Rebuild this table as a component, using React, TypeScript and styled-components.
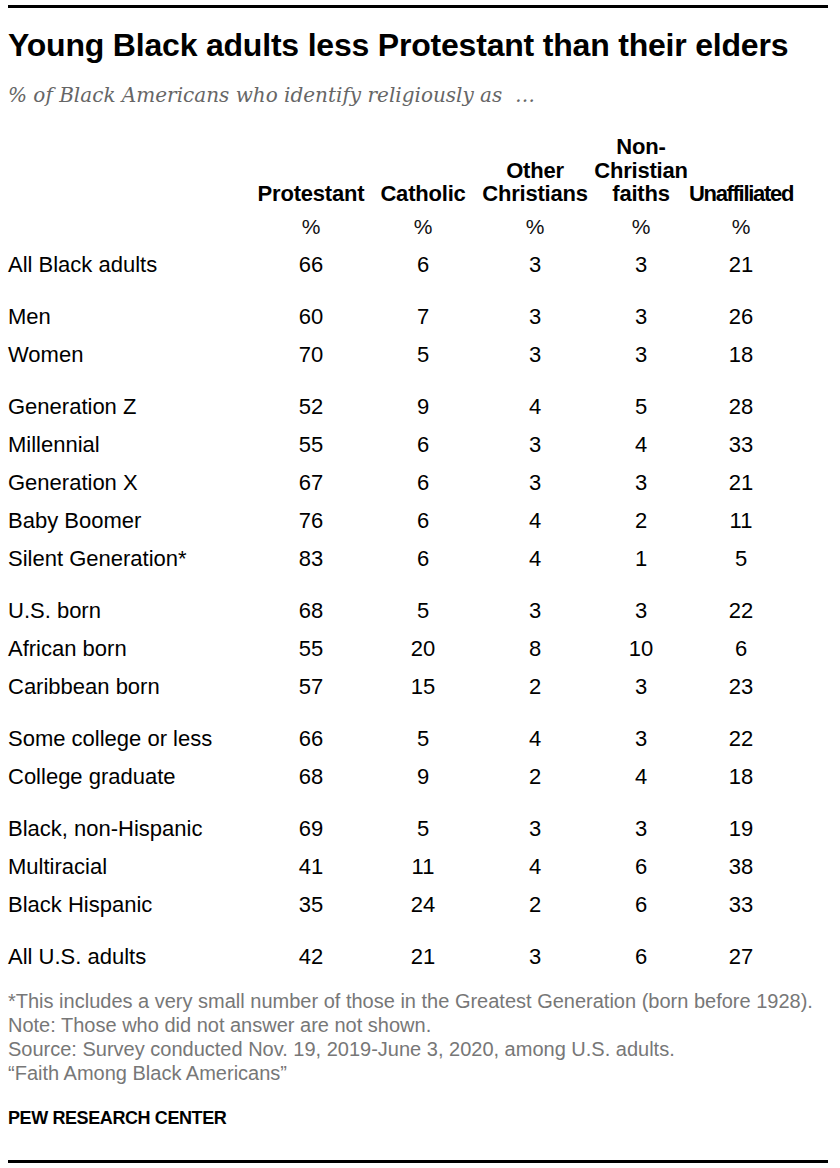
import React from "react";
import styled, { createGlobalStyle } from "styled-components";

const Global = createGlobalStyle`
  html, body { margin: 0; padding: 0; background: #fff; }
  body { font-family: "Liberation Sans", Arial, sans-serif; color: #000; }
`;

const Page = styled.div`
  width: 820px;
  padding: 5px 12px 0 8px;
  display: flex;
  flex-direction: column;
`;

const Rule = styled.div`
  height: 3px;
  background: #000;
`;

const Title = styled.h1`
  margin: 18px 0 0;
  font-family: "Liberation Sans", Arial, sans-serif;
  font-weight: 700;
  font-size: 32px;
  line-height: 38px;
  letter-spacing: -0.2px;
`;

const Subtitle = styled.p`
  margin: 19px 0 0;
  font-family: "DejaVu Serif", Georgia, serif;
  font-style: italic;
  font-size: 20px;
  line-height: 24px;
  color: #666;
`;

const Table = styled.div`
  margin-top: 28px;
  display: grid;
  grid-template-columns: 247px 112px 112px 112px 100px 100px;
`;

const HeadCell = styled.div<{ $squeeze?: boolean }>`
  align-self: end;
  justify-self: center;
  text-align: center;
  font-family: "Liberation Sans", Arial, sans-serif;
  font-weight: 700;
  font-size: 22px;
  line-height: 23.5px;
  letter-spacing: ${(p) => (p.$squeeze ? "-1.3px" : "-0.2px")};
  white-space: nowrap;
`;

const PctCell = styled.div`
  text-align: center;
  font-size: 21px;
  line-height: 24px;
  padding: 9px 0 7px;
  color: #111;
`;

const Label = styled.div<{ $gap: boolean }>`
  font-size: 22px;
  line-height: 38px;
  margin-top: ${(p) => (p.$gap ? "14px" : "0")};
  white-space: nowrap;
`;

const Value = styled.div<{ $gap: boolean }>`
  text-align: center;
  font-size: 22px;
  line-height: 38px;
  margin-top: ${(p) => (p.$gap ? "14px" : "0")};
`;

const Footer = styled.div`
  margin-top: 13px;
  font-family: "Liberation Sans", Arial, sans-serif;
  font-size: 20px;
  line-height: 24.3px;
  color: #777;
  white-space: nowrap;
`;

const Brand = styled.div`
  margin-top: 21px;
  font-family: "Liberation Sans", Arial, sans-serif;
  font-weight: 700;
  font-size: 18px;
  line-height: 22px;
  letter-spacing: -0.4px;
  color: #000;
`;

const BottomRule = styled(Rule)`
  margin-top: 31px;
`;

const headers: { lines: string[]; squeeze?: boolean }[] = [
  { lines: ["Protestant"] },
  { lines: ["Catholic"] },
  { lines: ["Other", "Christians"] },
  { lines: ["Non-", "Christian", "faiths"] },
  { lines: ["Unaffiliated"], squeeze: true },
];

type Row = { label: string; v: number[]; gap?: boolean };

const rows: Row[] = [
  { label: "All Black adults", v: [66, 6, 3, 3, 21] },
  { label: "Men", v: [60, 7, 3, 3, 26], gap: true },
  { label: "Women", v: [70, 5, 3, 3, 18] },
  { label: "Generation Z", v: [52, 9, 4, 5, 28], gap: true },
  { label: "Millennial", v: [55, 6, 3, 4, 33] },
  { label: "Generation X", v: [67, 6, 3, 3, 21] },
  { label: "Baby Boomer", v: [76, 6, 4, 2, 11] },
  { label: "Silent Generation*", v: [83, 6, 4, 1, 5] },
  { label: "U.S. born", v: [68, 5, 3, 3, 22], gap: true },
  { label: "African born", v: [55, 20, 8, 10, 6] },
  { label: "Caribbean born", v: [57, 15, 2, 3, 23] },
  { label: "Some college or less", v: [66, 5, 4, 3, 22], gap: true },
  { label: "College graduate", v: [68, 9, 2, 4, 18] },
  { label: "Black, non-Hispanic", v: [69, 5, 3, 3, 19], gap: true },
  { label: "Multiracial", v: [41, 11, 4, 6, 38] },
  { label: "Black Hispanic", v: [35, 24, 2, 6, 33] },
  { label: "All U.S. adults", v: [42, 21, 3, 6, 27], gap: true },
];

export default function App() {
  return (
    <>
      <Global />
      <Page>
        <Rule />
        <Title>Young Black adults less Protestant than their elders</Title>
        <Subtitle>% of Black Americans who identify religiously as&nbsp; …</Subtitle>
        <Table>
          <div />
          {headers.map((h, i) => (
            <HeadCell key={i} $squeeze={h.squeeze}>
              {h.lines.map((line, j) => (
                <div key={j}>{line}</div>
              ))}
            </HeadCell>
          ))}
          <div />
          {headers.map((_, i) => (
            <PctCell key={i}>%</PctCell>
          ))}
          {rows.map((r) => (
            <React.Fragment key={r.label}>
              <Label $gap={!!r.gap}>{r.label}</Label>
              {r.v.map((n, i) => (
                <Value key={i} $gap={!!r.gap}>
                  {n}
                </Value>
              ))}
            </React.Fragment>
          ))}
        </Table>
        <Footer>
          <div>*This includes a very small number of those in the Greatest Generation (born before 1928).</div>
          <div>Note: Those who did not answer are not shown.</div>
          <div>Source: Survey conducted Nov. 19, 2019-June 3, 2020, among U.S. adults.</div>
          <div>“Faith Among Black Americans”</div>
        </Footer>
        <Brand>PEW RESEARCH CENTER</Brand>
        <BottomRule />
      </Page>
    </>
  );
}
